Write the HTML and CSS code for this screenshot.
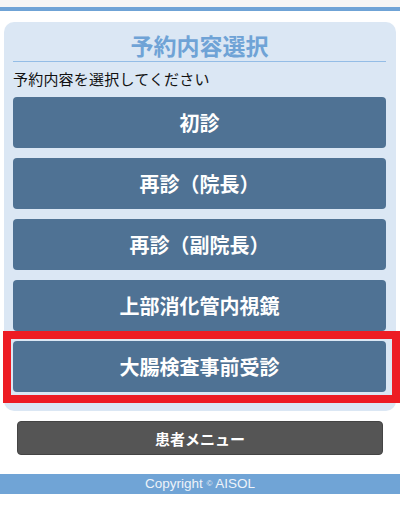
FILE: index.html
```html
<!DOCTYPE html>
<html lang="ja">
<head>
  <meta charset="utf-8">
  <meta name="viewport" content="width=device-width, initial-scale=1.0">
  <link rel="stylesheet" href="styles.css">
</head>
<body>
  <div class="topbar"></div>

  <div class="card">
    <h1 class="title">予約内容選択</h1>
    <p class="lead">予約内容を選択してください</p>
    <button type="button" class="choice">初診</button>
    <button type="button" class="choice">再診（院長）</button>
    <button type="button" class="choice">再診（副院長）</button>
    <button type="button" class="choice">上部消化管内視鏡</button>
    <div class="marked">
      <button type="button" class="choice">大腸検査事前受診</button>
    </div>
  </div>

  <button type="button" class="menu">患者メニュー</button>

  <footer class="footer">Copyright <span class="copy">©</span> AISOL</footer>
</body>
</html>
```

FILE: styles.css
```css
html, body {
  margin: 0;
  padding: 0;
  background-color: #fff;
  font-family: "Noto Sans CJK JP", "Noto Sans", sans-serif;
}

.topbar {
  height: 7px;
  background-color: #f5f5f5;
  border-bottom: 4px solid #6fa3d6;
}

.card {
  margin: 11px 4px 0;
  padding: 7px 10px 9px 9px;
  background-color: #dbe7f4;
  border-radius: 10px;
}

.title {
  margin: 0;
  height: 32px;
  line-height: 32px;
  text-align: center;
  font-size: 23px;
  font-weight: bold;
  color: #6fa3d6;
  border-bottom: 1px solid #94bde6;
}

.lead {
  margin: 6px 0 7px;
  font-size: 15px;
  letter-spacing: 0.2px;
  line-height: 22px;
  color: #111;
}

.choice {
  display: flex;
  align-items: center;
  justify-content: center;
  width: 100%;
  height: 51px;
  margin: 0 0 10px;
  padding: 0;
  border: none;
  border-radius: 4px;
  background-color: #4f7294;
  color: #fff;
  font-family: inherit;
  font-size: 20px;
  font-weight: bold;
  cursor: pointer;
}

.marked {
  position: relative;
}

/* red frame drawn around the highlighted choice */
.marked::after {
  content: "";
  position: absolute;
  top: -10px;
  left: -10px;
  right: -14px;
  bottom: -11px;
  border: 8px solid #ed1c24;
  pointer-events: none;
}

.menu {
  display: block;
  width: calc(100% - 34px);
  height: 34px;
  margin: 10px 17px 0;
  padding: 0;
  border: 1px solid #444;
  border-radius: 4px;
  background-color: #555;
  color: #fff;
  font-family: inherit;
  font-size: 15px;
  font-weight: bold;
}

.footer {
  margin-top: 19px;
  height: 20px;
  line-height: 20px;
  background-color: #70a4d6;
  color: #eef3f9;
  text-align: center;
  font-family: "Liberation Sans", Arial, sans-serif;
  font-size: 13.5px;
}

.copy {
  font-size: 8px;
  vertical-align: 2px;
}
```
